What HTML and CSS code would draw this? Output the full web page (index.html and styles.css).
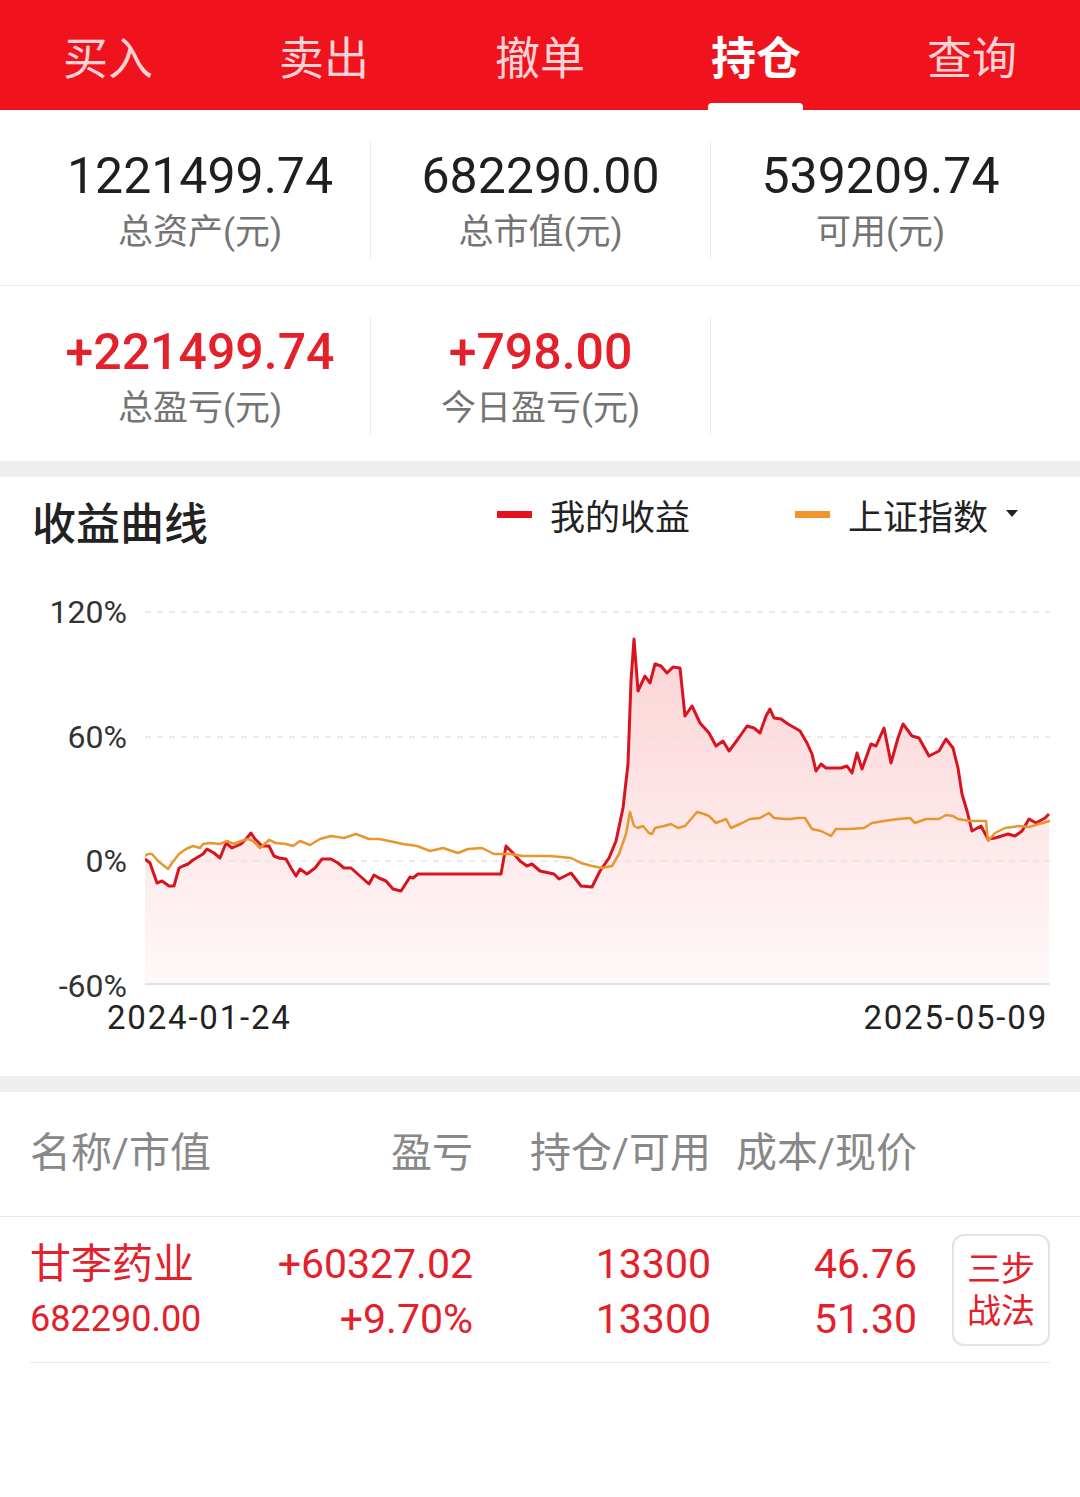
FILE: index.html
```html
<!DOCTYPE html>
<html lang="zh-CN">
<head>
    <meta charset="UTF-8">
    <meta name="viewport" content="width=device-width, initial-scale=1.0">
    <title>持仓</title>
    <link rel="stylesheet" href="styles.css">
</head>
<body>

<div class="tabs">
    <div class="tab">买入</div>
    <div class="tab">卖出</div>
    <div class="tab">撤单</div>
    <div class="tab active">持仓</div>
    <div class="tab">查询</div>
</div>

<div class="summary">
    <div class="summary-row">
        <div class="cell">
            <div class="num">1221499.74</div>
            <div class="label">总资产(元)</div>
        </div>
        <div class="cell">
            <div class="num">682290.00</div>
            <div class="label">总市值(元)</div>
        </div>
        <div class="cell">
            <div class="num">539209.74</div>
            <div class="label">可用(元)</div>
        </div>
    </div>
    <div class="summary-row">
        <div class="cell">
            <div class="num up">+221499.74</div>
            <div class="label">总盈亏(元)</div>
        </div>
        <div class="cell">
            <div class="num up">+798.00</div>
            <div class="label">今日盈亏(元)</div>
        </div>
        <div class="cell"></div>
    </div>
</div>

<div class="gap"></div>

<div class="chart-card">
    <div class="chart-head">
        <div class="chart-title">收益曲线</div>
        <div class="legend">
            <span class="swatch mine"></span>我的收益
        </div>
        <div class="legend">
            <span class="swatch index"></span>上证指数
            <svg class="caret" width="12" height="8" viewBox="0 0 12 8"><polygon points="0,0 12,0 6,7" fill="#222"/></svg>
        </div>
    </div>

    <div class="plot">
        <div class="y-axis">
            <span>120%</span>
            <span>60%</span>
            <span>0%</span>
            <span>-60%</span>
        </div>
        <svg class="lines" width="905" height="400" viewBox="145 591 905 400">
            <defs>
                <linearGradient id="fill" gradientUnits="userSpaceOnUse" x1="0" y1="637" x2="0" y2="983">
                    <stop offset="0" stop-color="#f0232d" stop-opacity="0.2"/>
                    <stop offset="1" stop-color="#f0232d" stop-opacity="0.03"/>
                </linearGradient>
            </defs>
            <!-- area under my curve -->
            <path fill="url(#fill)" d="M145 858 L150 862 L157 882 L162 880 L169 885 L174 885 L179 867 L183 865 L188 863 L193 859 L198 856 L203 853 L207 848 L214 852 L220 857 L226 842 L232 847 L241 843 L246 838 L251 832 L255 838 L262 845 L269 845 L274 855 L279 857 L286 858 L291 867 L296 875 L300 868 L307 873 L315 867 L322 858 L331 858 L338 862 L344 867 L351 867 L360 875 L369 883 L374 874 L379 877 L386 880 L393 888 L401 890 L410 876 L413 877 L418 873 L501 873 L506 845 L513 852 L520 860 L527 865 L532 863 L540 870 L554 873 L559 878 L571 872 L581 885 L592 886 L600 870 L609 857 L616 840 L623 807 L628 763 L631 680 L634 638 L638 690 L645 675 L650 682 L655 663 L661 665 L667 672 L673 666 L680 667 L685 715 L692 705 L700 722 L709 732 L716 745 L723 740 L729 750 L738 738 L747 725 L754 727 L760 732 L766 715 L770 708 L774 717 L781 718 L788 723 L795 727 L800 730 L807 742 L812 753 L816 770 L821 763 L826 767 L841 767 L847 765 L852 772 L857 752 L862 768 L871 743 L876 745 L884 727 L891 762 L898 737 L903 723 L912 735 L919 737 L929 755 L939 750 L946 738 L953 747 L958 767 L962 793 L967 810 L972 830 L981 825 L988 838 L995 837 L1008 833 L1015 835 L1022 830 L1029 818 L1036 822 L1045 817 L1049 813 L1049 983 L145 983 Z"/>
            <line class="grid" x1="145" y1="611" x2="1050" y2="611"/>
            <line class="grid" x1="145" y1="736" x2="1050" y2="736"/>
            <line class="grid" x1="145" y1="860" x2="1050" y2="860"/>
            <line class="axis" x1="145" y1="983" x2="1050" y2="983"/>
            <!-- my curve -->
            <path class="mine-line" d="M145 858 L150 862 L157 882 L162 880 L169 885 L174 885 L179 867 L183 865 L188 863 L193 859 L198 856 L203 853 L207 848 L214 852 L220 857 L226 842 L232 847 L241 843 L246 838 L251 832 L255 838 L262 845 L269 845 L274 855 L279 857 L286 858 L291 867 L296 875 L300 868 L307 873 L315 867 L322 858 L331 858 L338 862 L344 867 L351 867 L360 875 L369 883 L374 874 L379 877 L386 880 L393 888 L401 890 L410 876 L413 877 L418 873 L501 873 L506 845 L513 852 L520 860 L527 865 L532 863 L540 870 L554 873 L559 878 L571 872 L581 885 L592 886 L600 870 L609 857 L616 840 L623 807 L628 763 L631 680 L634 638 L638 690 L645 675 L650 682 L655 663 L661 665 L667 672 L673 666 L680 667 L685 715 L692 705 L700 722 L709 732 L716 745 L723 740 L729 750 L738 738 L747 725 L754 727 L760 732 L766 715 L770 708 L774 717 L781 718 L788 723 L795 727 L800 730 L807 742 L812 753 L816 770 L821 763 L826 767 L841 767 L847 765 L852 772 L857 752 L862 768 L871 743 L876 745 L884 727 L891 762 L898 737 L903 723 L912 735 L919 737 L929 755 L939 750 L946 738 L953 747 L958 767 L962 793 L967 810 L972 830 L981 825 L988 838 L995 837 L1008 833 L1015 835 L1022 830 L1029 818 L1036 822 L1045 817 L1049 813"/>
            <!-- index curve -->
            <path class="index-line" d="M145 855 L148 853 L152 853 L158 860 L168 868 L172 862 L179 853 L186 848 L193 845 L200 847 L203 843 L210 842 L220 843 L227 840 L234 843 L241 840 L248 838 L253 840 L260 847 L269 839 L276 842 L286 843 L293 845 L300 840 L310 844 L320 838 L331 835 L344 837 L356 833 L369 838 L379 838 L389 840 L403 843 L417 845 L430 850 L443 847 L458 852 L468 848 L482 847 L494 853 L510 853 L523 855 L540 855 L550 855 L561 856 L571 857 L581 862 L592 865 L602 867 L612 865 L619 853 L626 833 L630 811 L634 825 L638 827 L643 825 L649 832 L652 833 L655 827 L664 825 L671 823 L678 827 L685 825 L692 817 L697 811 L704 813 L709 815 L716 822 L726 818 L731 827 L740 823 L750 818 L760 817 L769 812 L774 817 L785 818 L791 818 L797 817 L805 817 L812 828 L821 830 L831 835 L836 828 L850 828 L864 827 L872 822 L884 820 L898 818 L910 817 L915 822 L926 818 L939 818 L946 814 L953 815 L958 818 L970 820 L986 820 L988 840 L995 832 L1005 827 L1019 825 L1029 826 L1039 823 L1050 820"/>
        </svg>
    </div>

    <div class="x-axis">
        <span>2024-01-24</span>
        <span>2025-05-09</span>
    </div>
</div>

<div class="gap"></div>

<div class="holdings">
    <div class="holdings-head">
        <div>名称/市值</div>
        <div class="right">盈亏</div>
        <div class="right">持仓/可用</div>
        <div class="right">成本/现价</div>
        <div></div>
    </div>
    <div class="holding">
        <div>
            <div class="line big">甘李药业</div>
            <div class="line small">682290.00</div>
        </div>
        <div class="right">
            <div class="line big">+60327.02</div>
            <div class="line big">+9.70%</div>
        </div>
        <div class="right">
            <div class="line big">13300</div>
            <div class="line big">13300</div>
        </div>
        <div class="right">
            <div class="line big">46.76</div>
            <div class="line big">51.30</div>
        </div>
        <div class="btn-cell">
            <div class="strategy">三步<br>战法</div>
        </div>
    </div>
</div>

</body>
</html>
```

FILE: styles.css
```css
body {
    margin: 0;
    padding: 0;
    background-color: #fff;
    font-family: Roboto, "Noto Sans CJK SC", sans-serif;
    color: #222;
}

/* top tabs */
.tabs {
    display: flex;
    height: 110px;
    background-color: #f0131e;
}
.tab {
    position: relative;
    flex: 1;
    display: flex;
    align-items: center;
    justify-content: center;
    font-size: 45px;
    color: rgba(255, 255, 255, 0.82);
}
.tab.active {
    color: #fff;
    font-weight: 700;
}
.tab.active::after {
    content: "";
    position: absolute;
    bottom: 0;
    left: 60px;
    width: 95px;
    height: 7px;
    background-color: #fff;
    border-radius: 4px 4px 0 0;
}

/* summary */
.summary-row {
    display: grid;
    grid-template-columns: 1fr 1fr 1fr;
    padding: 31px 30px 30px;
    height: 114px;
}
.summary-row:first-child {
    border-bottom: 1px solid #ececec;
}
.cell {
    display: flex;
    flex-direction: column;
    align-items: center;
    justify-content: center;
    padding-top: 4px;
}
.cell + .cell {
    border-left: 1px solid #ececec;
}
.num {
    font-size: 50px;
    line-height: 62px;
    color: #1f1f1f;
}
.num.up {
    color: #e4202a;
    font-weight: 500;
}
.label {
    font-size: 35px;
    line-height: 52px;
    color: #747474;
}

.gap {
    height: 16px;
    background-color: #eeeeee;
}

/* chart */
.chart-card {
    padding: 0 30px 40px;
}
.chart-head {
    display: flex;
    align-items: center;
    height: 88px;
    margin-bottom: 27px;
}
.chart-title {
    flex: 1;
    font-size: 44px;
    font-weight: 500;
    padding-left: 2px;
}
.legend {
    display: flex;
    align-items: center;
    font-size: 35px;
    margin-top: -14px;
}
.legend + .legend {
    margin-left: 105px;
    margin-right: 32px;
}
.swatch {
    width: 35px;
    height: 7px;
    margin-right: 18px;
}
.swatch.mine {
    background-color: #e8101c;
}
.swatch.index {
    background-color: #f0952a;
}
.caret {
    margin-left: 18px;
}
.plot {
    display: flex;
    align-items: flex-start;
}
.y-axis {
    width: 97px;
    height: 402px;
    margin-top: 6px;
    margin-right: 18px;
    display: flex;
    flex-direction: column;
    justify-content: space-between;
    align-items: flex-end;
    font-size: 32px;
    line-height: 28px;
    color: #333;
}
.lines {
    display: block;
}
.grid {
    stroke: #e4e4e4;
    stroke-width: 1.5;
    stroke-dasharray: 6 6;
}
.axis {
    stroke: #e2e2e2;
    stroke-width: 2;
}
.mine-line {
    fill: none;
    stroke: #d8141f;
    stroke-width: 3;
    stroke-linejoin: round;
}
.index-line {
    fill: none;
    stroke: #e8962e;
    stroke-width: 2.5;
    stroke-linejoin: round;
}
.x-axis {
    display: flex;
    justify-content: space-between;
    padding: 0 2px 0 77px;
    font-size: 33px;
    line-height: 36px;
    letter-spacing: 1.8px;
    color: #222;
}

/* holdings table */
.holdings-head,
.holding {
    display: grid;
    grid-template-columns: 210px 233px 238px 206px 1fr;
    padding: 0 30px;
}
.holdings-head {
    height: 125px;
    box-sizing: border-box;
    padding-bottom: 10px;
    align-items: center;
    font-size: 41px;
    color: #888;
    border-bottom: 1px solid #e6e6e6;
}
.right {
    text-align: right;
}
.holding {
    padding: 21px 0 14px;
    margin: 0 30px;
    border-bottom: 1px solid #e6e6e6;
    color: #e4202a;
}
.line {
    height: 55px;
    line-height: 52px;
}
.big {
    font-size: 41px;
}
.small {
    font-size: 36px;
}
.btn-cell {
    display: flex;
    justify-content: flex-end;
    align-items: flex-start;
}
.strategy {
    width: 98px;
    height: 112px;
    margin-top: -4px;
    box-sizing: border-box;
    border: 2px solid #e3e3e3;
    border-radius: 12px;
    display: flex;
    align-items: center;
    justify-content: center;
    font-size: 34px;
    line-height: 42px;
    text-align: center;
}
```
